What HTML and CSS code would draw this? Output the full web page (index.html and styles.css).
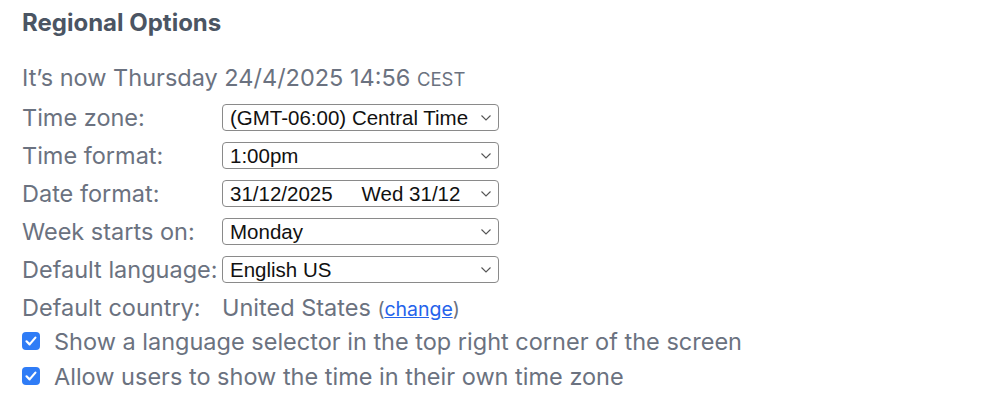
FILE: index.html
```html
<!DOCTYPE html>
<html lang="en">
<head>
<meta charset="utf-8">
<title>Regional Options</title>
<link rel="stylesheet" href="styles.css">
</head>
<body>
<section class="panel">
  <h2 class="title">Regional Options</h2>
  <div class="form">
    <div class="now">It’s now Thursday 24/4/2025 14:56 <span class="tz">CEST</span></div>
    <div class="row">
      <span class="label">Time zone:</span>
      <div class="select"><span class="val">(GMT-06:00) Central Time</span><svg class="chev" viewBox="0 0 10 6" width="10" height="6"><path d="M0.5 0.5 L5 5 L9.5 0.5" fill="none" stroke="#555" stroke-width="1.1"/></svg></div>
    </div>
    <div class="row">
      <span class="label">Time format:</span>
      <div class="select"><span class="val">1:00pm</span><svg class="chev" viewBox="0 0 10 6" width="10" height="6"><path d="M0.5 0.5 L5 5 L9.5 0.5" fill="none" stroke="#555" stroke-width="1.1"/></svg></div>
    </div>
    <div class="row">
      <span class="label">Date format:</span>
      <div class="select"><span class="val">31/12/2025<span class="alt">Wed 31/12</span></span><svg class="chev" viewBox="0 0 10 6" width="10" height="6"><path d="M0.5 0.5 L5 5 L9.5 0.5" fill="none" stroke="#555" stroke-width="1.1"/></svg></div>
    </div>
    <div class="row">
      <span class="label">Week starts on:</span>
      <div class="select"><span class="val">Monday</span><svg class="chev" viewBox="0 0 10 6" width="10" height="6"><path d="M0.5 0.5 L5 5 L9.5 0.5" fill="none" stroke="#555" stroke-width="1.1"/></svg></div>
    </div>
    <div class="row">
      <span class="label">Default language:</span>
      <div class="select"><span class="val">English US</span><svg class="chev" viewBox="0 0 10 6" width="10" height="6"><path d="M0.5 0.5 L5 5 L9.5 0.5" fill="none" stroke="#555" stroke-width="1.1"/></svg></div>
    </div>
    <div class="row">
      <span class="label">Default country:</span>
      <span class="country">United States <span class="paren">(<a href="#" class="link">change</a>)</span></span>
    </div>
    <div class="checks">
      <label class="check"><span class="box"><svg viewBox="0 0 18 18" width="18" height="18"><path d="M4.5 9.3 L7.6 12.4 L13.4 5.6" fill="none" stroke="#fff" stroke-width="2.2" stroke-linecap="round" stroke-linejoin="round"/></svg></span>Show a language selector in the top right corner of the screen</label>
      <label class="check"><span class="box"><svg viewBox="0 0 18 18" width="18" height="18"><path d="M4.5 9.3 L7.6 12.4 L13.4 5.6" fill="none" stroke="#fff" stroke-width="2.2" stroke-linecap="round" stroke-linejoin="round"/></svg></span>Allow users to show the time in their own time zone</label>
    </div>
  </div>
</section>
</body>
</html>
```
FILE: styles.css
```css
html, body {
  margin: 0;
  padding: 0;
  background: #ffffff;
}

body {
  font-family: Inter, "Noto Sans", sans-serif;
  color: #6b7280;
}

.panel {
  padding: 9px 22px 0 22px;
}

.title {
  margin: 0;
  font-size: 24px;
  line-height: 28px;
  font-weight: 700;
  color: #4b5563;
}

.form {
  margin-top: 27px;
  display: flex;
  flex-direction: column;
  gap: 11px;
}

.now {
  font-size: 23.5px;
  line-height: 27px;
}

.tz {
  font-size: 18.5px;
}

.row {
  display: flex;
  align-items: center;
  height: 27px;
  font-size: 23.5px;
}

.label {
  width: 200px;
  flex: none;
  white-space: nowrap;
}

.select {
  width: 277px;
  height: 27px;
  box-sizing: border-box;
  border: 1px solid #8a8a8a;
  border-radius: 4px;
  background: #fff;
  display: flex;
  align-items: center;
  padding: 0 7px 0 7px;
  font-family: "Liberation Sans", Arial, sans-serif;
  font-size: 20.5px;
  color: #111;
}

.val {
  white-space: nowrap;
}

.alt {
  margin-left: 29px;
}

.chev {
  margin-left: auto;
  flex: none;
}

.country {
  white-space: nowrap;
}

.paren {
  font-size: 19.5px;
}

.link {
  color: #2563eb;
  text-decoration: underline;
}

.checks {
  margin-top: -3px;
  display: flex;
  flex-direction: column;
  gap: 11px;
}

.check {
  display: flex;
  align-items: center;
  height: 24px;
  font-size: 23.5px;
  white-space: nowrap;
}

.box {
  width: 18px;
  height: 18px;
  border-radius: 4px;
  background: #2f7cf6;
  flex: none;
  margin-right: 14px;
  display: flex;
}
```
